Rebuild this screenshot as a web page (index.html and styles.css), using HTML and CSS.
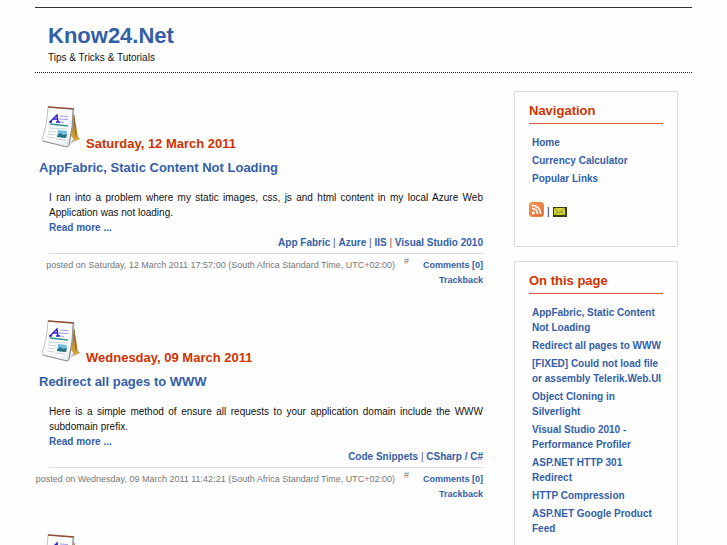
FILE: index.html
```html
<!DOCTYPE html>
<html lang="en">
<head>
<meta charset="utf-8">
<title>Know24.Net</title>
<link rel="stylesheet" href="styles.css">
</head>
<body>
<svg class="defs" aria-hidden="true">
  <defs>
    <linearGradient id="paper" x1="0" y1="0" x2="1" y2="1">
      <stop offset="0" stop-color="#fff"/><stop offset=".7" stop-color="#f8fafc"/><stop offset="1" stop-color="#d5dadd"/>
    </linearGradient>
    <linearGradient id="gold" x1="0" y1="0" x2="0" y2="1">
      <stop offset="0" stop-color="#8a5535"/><stop offset="1" stop-color="#d9ab35"/>
    </linearGradient>
    <linearGradient id="orange" x1="0" y1="0" x2="1" y2="1">
      <stop offset="0" stop-color="#f5a060"/><stop offset="1" stop-color="#e8662a"/>
    </linearGradient>
    <symbol id="calendar" viewBox="0 0 40 42">
      <path d="M28 38L38 33L35 30L30 34Z" fill="#aaa" opacity=".7"/>
      <path d="M31 2L36 31L38 33L33 35L29 30Z" fill="url(#gold)"/>
      <path d="M32 9L34 31" stroke="#8f6828" fill="none"/>
      <path d="M6 1L32 3Q31 22 27 40L25 41L1 35L0 33Q5 20 6 1Z" fill="url(#paper)" stroke="#aeb1b5" stroke-width=".8"/>
      <path d="M31 4Q31 21 27 39" stroke="#777" fill="none" stroke-width=".8"/>
      <path d="M6 1L32 3" stroke="#8d4a32" stroke-width="1.6"/>
      <path d="M1 35L25 41L27 39" stroke="#999" fill="none"/>
      <path d="M8 16L15 9L16 16M11 13H16M7 16H10M14 16H18" stroke="#2b20d2" stroke-width="1.4" fill="none"/>
      <path d="M18 10L26 10.500M17 13L26 13.500M18 16L22 16.500" stroke="#8a82ee" stroke-width=".8" fill="none"/>
      <path d="M8 18L26 20" stroke="#329494" stroke-width="1.300"/>
      <path d="M7 22L25 23M6 25L14 26M6 28L13 29M5 31L13 32M14 33L23 34" stroke="#c3c8cd" stroke-width=".8" fill="none"/>
      <path d="M16 24L25 25L24 32L15 31Z" fill="#74bce1"/>
      <path d="M15 30L18 27L21 29L25 28L24 32L15 31Z" fill="#28727d"/>
    </symbol>
  </defs>
</svg>
<div class="page">
  <header class="header">
    <h1>Know24.Net</h1>
    <p>Tips &amp; Tricks &amp; Tutorials</p>
  </header>
  <div class="columns">
    <main class="posts">
      <article class="post">
        <h2 class="date"><svg class="calendar" aria-hidden="true"><use href="#calendar"/></svg><span>Saturday, 12 March 2011</span></h2>
        <h3><a href="#">AppFabric, Static Content Not Loading</a></h3>
        <div class="entry">
          <p>I ran into a problem where my static images, css, js and html content in my local Azure Web Application was not loading.</p>
          <a href="#">Read more ...</a>
          <p class="tags"><a href="#">App Fabric</a> | <a href="#">Azure</a> | <a href="#">IIS</a> | <a href="#">Visual Studio 2010</a></p>
          <footer class="meta">
            <span>posted on Saturday, 12 March 2011 17:57:00 (South Africa Standard Time, UTC+02:00)</span>
            <span class="hash">#</span>
            <span class="responses"><a href="#">Comments [0]</a><a href="#">Trackback</a></span>
          </footer>
        </div>
      </article>
      <article class="post">
        <h2 class="date"><svg class="calendar" aria-hidden="true"><use href="#calendar"/></svg><span>Wednesday, 09 March 2011</span></h2>
        <h3><a href="#">Redirect all pages to WWW</a></h3>
        <div class="entry">
          <p>Here is a simple method of ensure all requests to your application domain include the WWW subdomain prefix.</p>
          <a href="#">Read more ...</a>
          <p class="tags"><a href="#">Code Snippets</a> | <a href="#">CSharp / C#</a></p>
          <footer class="meta">
            <span>posted on Wednesday, 09 March 2011 11:42:21 (South Africa Standard Time, UTC+02:00)</span>
            <span class="hash">#</span>
            <span class="responses"><a href="#">Comments [0]</a><a href="#">Trackback</a></span>
          </footer>
        </div>
      </article>
      <article class="post">
        <div class="date"><svg class="calendar" aria-hidden="true"><use href="#calendar"/></svg></div>
      </article>
    </main>
    <aside class="sidebar">
      <nav class="box navigation">
        <h2>Navigation</h2>
        <ul>
          <li><a href="#">Home</a></li>
          <li><a href="#">Currency Calculator</a></li>
          <li><a href="#">Popular Links</a></li>
        </ul>
        <div class="feeds">
          <a href="#" aria-label="RSS feed"><svg class="rss" viewBox="0 0 15 15"><rect x=".5" y=".5" width="14" height="14" rx="2.500" fill="url(#orange)" stroke="#e98549"/><circle cx="4.300" cy="10.900" r="1.400" fill="#fff"/><path d="M3 6.500a5.600 5.600 0 0 1 5.600 5.600M3 3.300a8.800 8.800 0 0 1 8.800 8.800" fill="none" stroke="#fff" stroke-width="1.700"/></svg></a>
          <span>|</span>
          <a href="#" aria-label="Email"><svg class="mail" viewBox="0 0 14 10"><rect width="14" height="10" fill="#3a3b14"/><rect x="1" y="1" width="11" height="7" fill="#d3d63e"/><path d="M1.500 1.500L6.500 6L11.500 1.500M1.500 8L5 4.700M11.500 8L8 4.700" stroke="#77791c" stroke-width=".8" fill="none"/></svg></a>
        </div>
      </nav>
      <nav class="box contents">
        <h2>On this page</h2>
        <ul>
          <li><a href="#">AppFabric, Static Content Not Loading</a></li>
          <li><a href="#">Redirect all pages to WWW</a></li>
          <li><a href="#">[FIXED] Could not load file or assembly Telerik.Web.UI</a></li>
          <li><a href="#">Object Cloning in Silverlight</a></li>
          <li><a href="#">Visual Studio 2010 - Performance Profiler</a></li>
          <li><a href="#">ASP.NET HTTP 301 Redirect</a></li>
          <li><a href="#">HTTP Compression</a></li>
          <li><a href="#">ASP.NET Google Product Feed</a></li>
        </ul>
      </nav>
    </aside>
  </div>
</div>
</body>
</html>
```
FILE: styles.css
```css
* { box-sizing: border-box; }
body {
  margin: 0;
  height: 100vh;
  overflow: hidden;
  background: #fefefe;
  color: #111;
  font: 10px/15px "Liberation Sans", Arial, sans-serif;
}
h1, h2, h3, p, ul { margin: 0; padding: 0; }
ul { list-style: none; }
a { color: #335ea8; font-weight: bold; text-decoration: none; }
.defs { position: absolute; width: 0; height: 0; }
.page { margin: 7px 35px 0; }
.header {
  padding: 14px 13px 7px;
  border-top: 1px solid #333;
  border-bottom: 1px dotted #222;
}
.header h1 { color: #335ea8; font-size: 22px; line-height: 28px; }
.columns {
  display: grid;
  grid-template-columns: minmax(0, 1fr) 164px;
  gap: 31px;
  padding: 18px 14px 0 4px;
}
.posts { padding-top: 15px; }
.post { margin-bottom: 32px; }
.date {
  display: flex;
  align-items: flex-end;
  gap: 4px;
  height: 46px;
  color: #cf3300;
  font-size: 13px;
  line-height: 17px;
}
.calendar { width: 40px; height: 42px; margin: 0 0 4px 3px; }
.post h3 { margin-top: 8px; font-size: 13px; line-height: 16px; }
.entry { padding: 14px 0 0 10px; text-align: justify; }
.entry .tags { color: #555; text-align: right; }
.meta {
  display: flex;
  justify-content: flex-end;
  margin-top: 3px;
  padding-top: 4px;
  border-top: 1px solid #ddd;
  color: #777;
  font-size: 9px;
  text-align: right;
  white-space: nowrap;
}
.hash { margin: -4px 14px 0 9px; }
.responses { display: flex; flex-direction: column; }
.box {
  margin-bottom: 14px;
  padding: 11px 14px 14px;
  border: 1px solid #ddd;
}
.box h2 {
  padding-bottom: 5px;
  border-bottom: 1px solid #dd5c3a;
  color: #cf3300;
  font-size: 13px;
  line-height: 15px;
}
.box ul { padding: 11px 0 0 3px; }
.box li { margin-bottom: 3px; }
.navigation { height: 156px; }
.feeds { display: flex; align-items: flex-end; gap: 3px; margin-top: 16px; }
.feeds a { display: flex; }
.feeds span { line-height: 11px; }
.rss { width: 15px; height: 15px; }
.mail { width: 14px; height: 10px; }
.contents { min-height: 420px; }
```
